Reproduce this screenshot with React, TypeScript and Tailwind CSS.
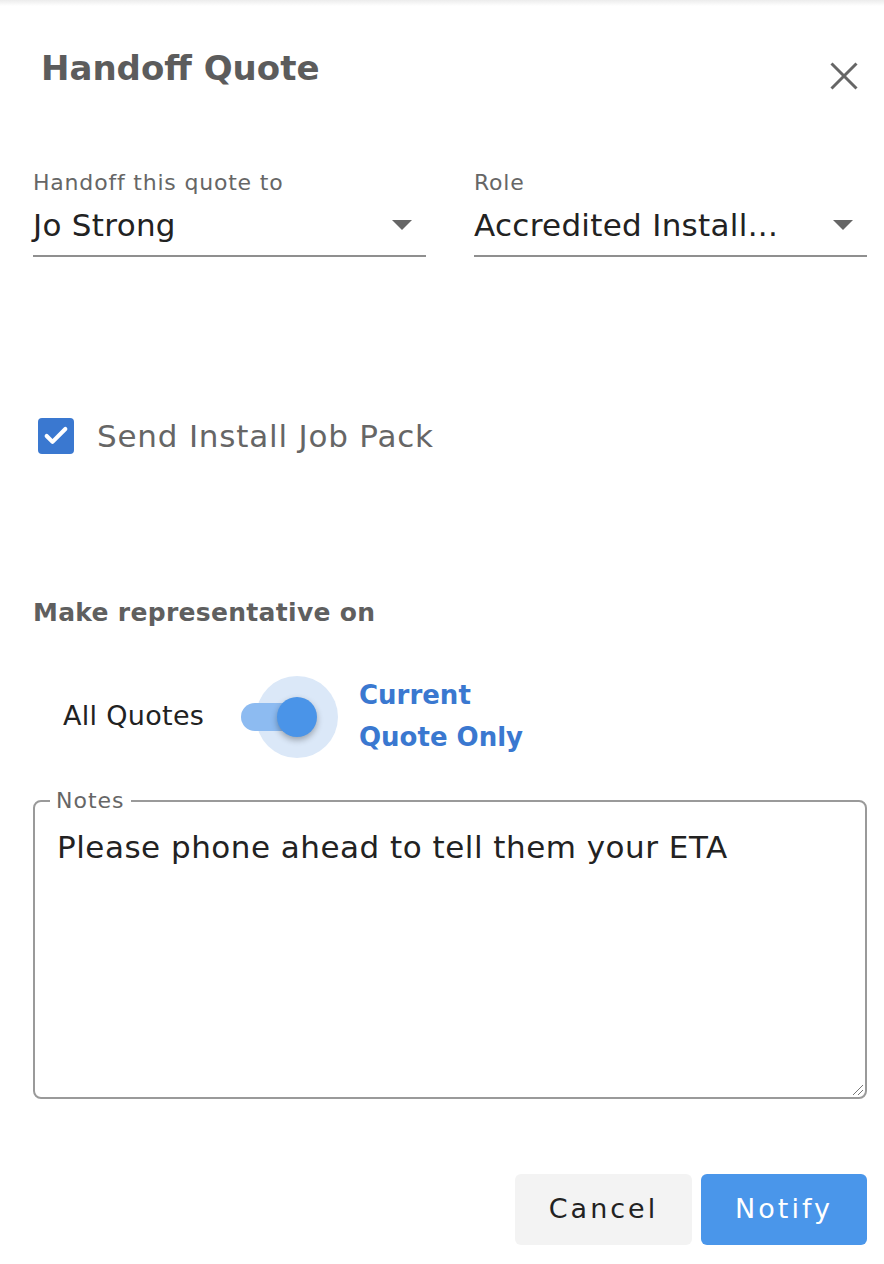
import React from 'react';
import { Check } from 'lucide-react';

const font = { fontFamily: '"DejaVu Sans", "Noto Sans", sans-serif' };

const Select = ({ label, value }: { label: string; value: string }) => (
  <div className="flex-1 min-w-0">
    <div className="text-[22px] leading-[26px] tracking-[0.8px] text-[#666]">{label}</div>
    <div className="flex items-center justify-between h-[61px] pb-[2px] border-b-2 border-[#8f8f8f]">
      <span className="text-[31px] leading-[36px] tracking-[0.3px] text-[#222] whitespace-nowrap">{value}</span>
      <span className="w-0 h-0 border-l-[10px] border-r-[10px] border-t-[10px] border-l-transparent border-r-transparent border-t-[#666] mr-[14px]" />
    </div>
  </div>
);

export default function App() {
  return (
    <div className="w-[884px] h-[1264px] bg-white overflow-hidden" style={font}>
      <div className="h-[6px] bg-gradient-to-b from-[#ececec] to-white" />
      <div className="pl-[33px] pr-[17px]">
        <div className="flex items-start justify-between pt-[40px] h-[84px]">
          <h1 className="text-[34px] leading-[44px] font-bold text-[#5c5c5c] ml-[8px]">Handoff Quote</h1>
          <button className="mt-[16px] mr-[9px]">
            <svg width="28" height="28" viewBox="0 0 28 28" stroke="#666" strokeWidth="3" strokeLinecap="butt">
              <line x1="1.5" y1="1.5" x2="26.5" y2="26.5" />
              <line x1="26.5" y1="1.5" x2="1.5" y2="26.5" />
            </svg>
          </button>
        </div>

        <div className="flex gap-[48px] mt-[80px]">
          <Select label="Handoff this quote to" value="Jo Strong" />
          <Select label="Role" value="Accredited Install..." />
        </div>

        <label className="flex items-center gap-[23px] mt-[159px] ml-[5px] h-[40px]">
          <span className="w-[36px] h-[36px] rounded-[4px] bg-[#3a78d0] flex items-center justify-center text-white">
            <Check size={28} strokeWidth={3.5} />
          </span>
          <span className="text-[31px] leading-[40px] tracking-[0.8px] text-[#666]">Send Install Job Pack</span>
        </label>

        <div className="mt-[141px] text-[25px] leading-[32px] tracking-[0.3px] font-bold text-[#5f5f5f]">Make representative on</div>

        <div className="flex items-center mt-[45px] ml-[30px] h-[84px]">
          <span className="text-[27px] leading-[34px] tracking-[0.3px] text-[#222] w-[178px]">All Quotes</span>
          <div className="relative w-[76px] h-[40px] mt-[2px]">
            <div className="absolute left-[15px] top-[-21px] w-[82px] h-[82px] rounded-full bg-[#dbe8f8]" />
            <div className="absolute left-0 top-[6px] w-[68px] h-[28px] rounded-full bg-[#8dbbf1]" />
            <div className="absolute left-[36px] top-0 w-[40px] h-[40px] rounded-full bg-[#4a94e8] shadow-[0_3px_6px_rgba(0,0,0,0.3)]" />
          </div>
          <div className="ml-[42px] text-[26px] leading-[42px] font-bold text-[#3a78d0]">
            Current<br />Quote Only
          </div>
        </div>

        <fieldset className="relative mt-[33px] h-[308px] border-2 border-[#9a9a9a] rounded-[8px] px-[22px]">
          <legend className="px-[6px] -ml-[7px] text-[22px] leading-[20px] tracking-[1px] text-[#666]">Notes</legend>
          <div className="text-[31px] leading-[40px] tracking-[0.5px] text-[#222] mt-[16px]">Please phone ahead to tell them your ETA</div>
          <svg className="absolute right-[1px] bottom-[1px]" width="14" height="14" viewBox="0 0 14 14" stroke="#777" strokeWidth="1">
            <line x1="13" y1="3" x2="3" y2="13" />
            <line x1="13" y1="8" x2="8" y2="13" />
          </svg>
        </fieldset>

        <div className="flex justify-end gap-[9px] mt-[75px]">
          <button className="w-[177px] h-[71px] rounded-[6px] bg-[#f3f3f3] text-[27px] tracking-[3px] text-[#222]">Cancel</button>
          <button className="w-[166px] h-[71px] rounded-[6px] bg-[#4a96ea] text-[27px] tracking-[3px] text-white">Notify</button>
        </div>
      </div>
    </div>
  );
}
